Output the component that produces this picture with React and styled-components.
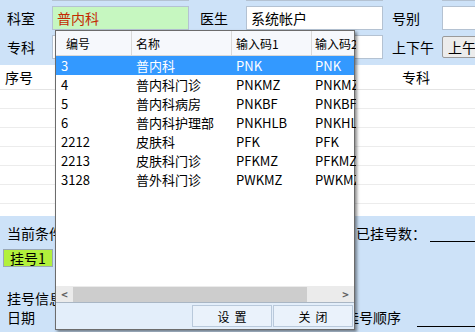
import styled, { createGlobalStyle } from "styled-components";

const GlobalStyle = createGlobalStyle`
  * { box-sizing: border-box; }
  body {
    margin: 0;
    font-family: "Noto Sans CJK SC", "Microsoft YaHei", sans-serif;
    color: #000;
  }
`;

const Page = styled.div`
  position: relative;
  width: 475px;
  height: 332px;
  overflow: hidden;
  background: #cde2f8;
  font-size: 14px;
`;

const Form = styled.div`
  display: grid;
  grid-template-columns: 45px 137px 57px 137px 59px 60px;
  grid-auto-rows: 24px;
  row-gap: 5px;
  padding-left: 7px;
  margin-top: -23px;
`;

const Label = styled.div`
  display: flex;
  align-items: center;
  padding-left: ${({ $indent }) => $indent || 0}px;
  white-space: nowrap;
`;

const Field = styled.div`
  display: flex;
  align-items: center;
  padding-left: 4px;
  background: ${({ $green }) => ($green ? "#c6f7c0" : "#fff")};
  color: ${({ $red }) => ($red ? "#c42a00" : "#000")};
  border: 1px solid #b4c2d2;
  white-space: nowrap;
`;

const GreyButton = styled.div`
  display: flex;
  align-items: center;
  padding-left: 5px;
  margin: 1px 0;
  background: #ececec;
  border: 1px solid #9a9a9a;
  border-radius: 2px;
`;

const Grid = styled.div`
  margin-top: 6px;
  background: #fff;
  height: 151px;
`;

const GridHead = styled.div`
  display: flex;
  align-items: center;
  height: 25px;
  padding-left: 5px;
  border-bottom: 1px solid #e4e4e4;
  & > span:last-child {
    margin-left: auto;
    margin-right: 45px;
  }
`;

const GridRow = styled.div`
  height: 19px;
  border-bottom: 1px solid #ececec;
`;

const Lower = styled.div`
  display: flex;
  flex-direction: column;
  padding: 8px 0 0 7px;
`;

const Line = styled.div`
  display: flex;
  align-items: ${({ $align }) => $align || "center"};
  height: ${({ $h }) => $h}px;
  padding-top: ${({ $top }) => $top || 0}px;
`;

const Count = styled.div`
  display: flex;
  align-items: center;
  margin-left: auto;
  white-space: nowrap;
`;

const Blank = styled.span`
  display: inline-block;
  width: ${({ $w }) => $w}px;
  height: ${({ $h }) => $h}px;
  margin-left: ${({ $gap }) => $gap}px;
  border-bottom: 1px solid #000;
`;

const LimeTag = styled.div`
  display: flex;
  align-items: center;
  width: 50px;
  height: 18px;
  margin-left: -4px;
  padding-left: 6px;
  background: #b2f03c;
  border: 1px solid #9aa8b4;
`;

const Popup = styled.div`
  position: absolute;
  left: 55px;
  top: 30px;
  width: 300px;
  height: 300px;
  display: flex;
  flex-direction: column;
  background: #fff;
  border: 1px solid #6c6c6c;
  box-shadow: 2px 2px 3px rgba(0, 0, 0, 0.45);
  font-size: 12px;
`;

const PopHead = styled.div`
  display: flex;
  height: 25px;
  background: #f6f8fc;
  border-bottom: 1px solid #d9d9d9;
`;

const Cell = styled.div`
  display: flex;
  align-items: center;
  flex: 0 0 ${({ $w }) => $w}px;
  padding-left: ${({ $pad }) => $pad}px;
  overflow: hidden;
  white-space: nowrap;
  border-right: ${({ $sep }) => ($sep ? "1px solid #d9d9d9" : "none")};
`;

const PopBody = styled.div`
  flex: 1;
`;

const PopRow = styled.div`
  display: flex;
  height: 19px;
  background: ${({ $sel }) => ($sel ? "#3399ff" : "transparent")};
  color: ${({ $sel }) => ($sel ? "#fff" : "#000")};
  font-size: 13px;
`;

const HScroll = styled.div`
  display: flex;
  align-items: center;
  height: 16px;
  background: #ebebeb;
  color: #606060;
  font-size: 11px;
`;

const Arrow = styled.div`
  flex: 0 0 17px;
  display: flex;
  align-items: center;
  justify-content: center;
  font-weight: bold;
`;

const Thumb = styled.div`
  flex: 0 0 234px;
  height: 15px;
  background: #cdcdcd;
`;

const Track = styled.div`
  flex: 1;
`;

const PopFoot = styled.div`
  display: flex;
  justify-content: flex-end;
  gap: 1px;
  height: 27px;
  padding: 2px 1px 2px 0;
  background: #e3eefa;
  border-top: 1px solid #a9b6c4;
`;

const FootButton = styled.div`
  width: 80px;
  display: flex;
  align-items: center;
  justify-content: center;
  letter-spacing: 5px;
  padding-left: 5px;
  background: #eaf2fb;
  border: 1px solid #b9c9db;
`;

const rows = [
  ["3", "普内科", "PNK", "PNK"],
  ["4", "普内科门诊", "PNKMZ", "PNKMZ"],
  ["5", "普内科病房", "PNKBF", "PNKBF"],
  ["6", "普内科护理部", "PNKHLB", "PNKHLB"],
  ["2212", "皮肤科", "PFK", "PFK"],
  ["2213", "皮肤科门诊", "PFKMZ", "PFKMZ"],
  ["3128", "普外科门诊", "PWKMZ", "PWKMZ"],
];

const cols = [
  { w: 76, pad: 5 },
  { w: 100, pad: 4 },
  { w: 80, pad: 4 },
  { w: 44, pad: 3 },
];

export default function App() {
  return (
    <>
      <GlobalStyle />
      <Page>
        <Form>
          <Label />
          <Field />
          <Label />
          <Field />
          <Label />
          <Field />

          <Label>科室</Label>
          <Field $green $red>普内科</Field>
          <Label $indent={11}>医生</Label>
          <Field>系统帐户</Field>
          <Label $indent={9}>号别</Label>
          <Field />

          <Label>专科</Label>
          <Field />
          <Label />
          <Field />
          <Label $indent={9}>上下午</Label>
          <GreyButton>上午</GreyButton>
        </Form>

        <Grid>
          <GridHead>
            <span>序号</span>
            <span>专科</span>
          </GridHead>
          {Array.from({ length: 6 }).map((_, i) => (
            <GridRow key={i} />
          ))}
        </Grid>

        <Lower>
          <Line $h={18}>
            当前条件：
            <Count>
              已挂号数：
              <Blank $w={45} $h={18} $gap={4} />
            </Count>
          </Line>
          <Line $h={28} $top={7} $align="flex-start">
            <LimeTag>挂号1</LimeTag>
          </Line>
          <Line $h={38} $align="flex-end">
            挂号信息
          </Line>
          <Line $h={18}>
            日期
            <Count>
              挂号顺序
              <Blank $w={58} $h={20} $gap={16} />
            </Count>
          </Line>
        </Lower>

        <Popup>
          <PopHead>
            {["编号", "名称", "输入码1", "输入码2"].map((h, i) => (
              <Cell key={h} $w={cols[i].w} $pad={i === 0 ? 10 : cols[i].pad} $sep={i < 3}>
                {h}
              </Cell>
            ))}
          </PopHead>
          <PopBody>
            {rows.map((r, idx) => (
              <PopRow key={r[0]} $sel={idx === 0}>
                {r.map((v, i) => (
                  <Cell key={i} $w={cols[i].w} $pad={cols[i].pad}>
                    {v}
                  </Cell>
                ))}
              </PopRow>
            ))}
          </PopBody>
          <HScroll>
            <Arrow>&lt;</Arrow>
            <Thumb />
            <Track />
            <Arrow>&gt;</Arrow>
          </HScroll>
          <PopFoot>
            <FootButton>设置</FootButton>
            <FootButton>关闭</FootButton>
          </PopFoot>
        </Popup>
      </Page>
    </>
  );
}
